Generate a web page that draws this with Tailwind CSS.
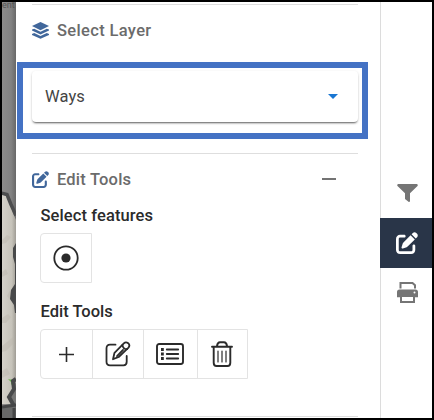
<!DOCTYPE html>
<html lang="en">
<head>
<meta charset="utf-8">
<title>Edit Tools</title>
<script src="https://cdn.jsdelivr.net/npm/@tailwindcss/browser@4"></script>
</head>
<body class="font-[Roboto,sans-serif] text-[#2b2b2b]">
<svg class="hidden">
  <symbol id="pen" viewBox="0 0 512 512"><path fill="currentColor" d="M471.6 21.7c-21.9-21.9-57.3-21.9-79.2 0L362.3 51.7l97.9 97.9 30.1-30.1c21.9-21.9 21.9-57.3 0-79.2L471.6 21.7zm-299.2 220c-6.1 6.1-10.8 13.6-13.5 21.9l-29.6 88.8c-2.9 8.6-.6 18.1 5.8 24.6s15.9 8.700 24.600 5.800l88.800-29.600c8.200-2.700 15.700-7.400 21.900-13.500L437.700 172.300 339.700 74.300 172.400 241.700zM96 64C43 64 0 107 0 160V416c0 53 43 96 96 96H352c53 0 96-43 96-96V320c0-17.700-14.300-32-32-32s-32 14.300-32 32v96c0 17.700-14.300 32-32 32H96c-17.700 0-32-14.300-32-32V160c0-17.700 14.300-32 32-32h96c17.700 0 32-14.300 32-32s-14.300-32-32-32H96z"/></symbol>
</svg>
<div class="relative flex h-[420px] w-[434px] overflow-hidden border-2 border-black bg-white">
  <!-- map -->
  <div class="relative h-[416px] w-[14px] shrink-0 bg-[#858585]">
    <svg class="block" width="14" height="416" viewBox="2 2 14 416">
      <defs>
        <linearGradient id="g" x1="0" x2="1" y1="0" y2="0"><stop offset="0" stop-color="#8c8b8a"/><stop offset=".65" stop-color="#828282"/><stop offset="1" stop-color="#686868"/></linearGradient>
        <linearGradient id="l" x1="0" x2="1" y1="0" y2="0"><stop offset="0" stop-color="#d4d1c9"/><stop offset=".7" stop-color="#c6c3ba"/><stop offset="1" stop-color="#9f9c95"/></linearGradient>
      </defs>
      <path fill="url(#g)" d="M2 2h14v416H2z"/>
      <path fill="url(#l)" d="M2 194L8 197L13 213L16 220V404H2z"/>
      <g fill="#b8b4aa" opacity=".4"><path d="M2 240l5-5 4 2-5 6-4 1zM2 272l4-3 2 5-6 3zM10 290l5 5-4 6-4-5zM2 318l6-4 3 3-5 6H2zM7 342l6-5 1 6-8 8-4 1v-6zM2 371l5-3 3 6-8 4z"/></g>
      <path d="M1 193l6 1.500 4 10 5 11" fill="none" stroke="#4c4d4e" stroke-width="3.500"/>
      <path fill="#48494a" d="M16 243l-3 5v9l2 7v20l-4 6-1 9 4 6 1 8h1z"/>
      <path fill="#6fbd52" d="M8 379l5 1v3l-2 2v-3z"/>
      <path fill="#777776" d="M16 382l-4 9-2 5 3 8v14h3z"/>
      <path d="M16 379l-3 2 1 8-5 8 5 9" fill="none" stroke="#48494a" stroke-width="4"/>
      <path fill="#686969" d="M2 407l14-1v12H2z"/><path fill="none" stroke="#454647" stroke-width="3" d="M2 407l14-2M14 408v10"/>
    </svg>
    <span class="absolute top-[-4px] left-0 text-[9px] leading-[14px] text-[#555]">ent</span>
  </div>

  <!-- panel -->
  <main class="w-[364px] shrink-0 px-4 pt-[2px]">
    <section class="h-[149px] w-[326px] border-t border-[#dedede]">
      <h2 class="flex h-[51px] items-center gap-2 text-[16.5px] leading-[24px] font-medium tracking-[0.34px] text-[#6b6b6b]">
        <svg class="h-[17px] w-[17px] shrink-0" viewBox="0 0 17 17" fill="#41679b"><path d="M8.500 0L17 4.100 8.500 8.200 0 4.100z"/><path d="M0 7.600l2.200-.9 6.300 3 6.300-3 2.200.9v1L8.500 12.400 0 8.600z"/><path d="M0 11.900l2.200-.9 6.300 3 6.300-3 2.200.9v1L8.500 16.800 0 12.900z"/></svg>
        <span class="pt-[1px]">Select Layer</span>
      </h2>
      <div class="mt-[15px] flex h-[51px] items-center justify-between rounded-[4px] bg-white pr-5 pl-[13px] shadow-[0_2px_2px_-1px_rgba(0,0,0,.55),0_1px_3px_rgba(0,0,0,.16)]">
        <span class="pt-[1px] text-[16.5px] leading-[24px] tracking-[0.1px] text-[#444]">Ways</span>
        <svg class="h-[5px] w-[10px]" viewBox="0 0 10 5"><path d="M0 0h10L5 5z" fill="#1976d2"/></svg>
      </div>
    </section>

    <section class="h-[264px] w-[326px] border-t border-b border-[#dedede]">
      <div class="flex h-[51px] items-center justify-between pr-[22px]">
        <h2 class="flex items-center gap-[8px] text-[16.5px] leading-[24px] font-medium tracking-[0.2px] text-[#6b6b6b]">
          <svg class="-mt-[1px] h-[17px] w-[17px] text-[#41679b]"><use href="#pen"/></svg>
          <span class="pt-[1px]">Edit Tools</span>
        </h2>
        <span class="-mt-[2px] h-[2px] w-[14px] bg-[#737373]"></span>
      </div>
      <div class="pl-[8px]">
        <h3 class="h-[28px] pl-[0.5px] text-[16.5px] leading-[22px] font-medium tracking-[0.1px]">Select features</h3>
        <div class="flex h-[50px] w-[52px] items-center justify-center rounded-l-[4px] border border-[#e3e3e3]">
          <svg class="h-[26px] w-[26px]" viewBox="0 0 26 26"><circle cx="13" cy="13" r="11.700" fill="none" stroke="#2b2b2b" stroke-width="1.800"/><circle cx="13" cy="13" r="4.600" fill="#2b2b2b"/></svg>
        </div>
        <h3 class="mt-[18px] h-[28px] pl-[0.5px] text-[16.5px] leading-[22px] font-medium">Edit Tools</h3>
        <div class="flex h-[50px] w-[208px] rounded-l-[4px] border border-[#e3e3e3]">
          <div class="flex w-[51px] items-center justify-center">
            <svg class="h-[15px] w-[15px]" viewBox="0 0 15 15" stroke="#2b2b2b" stroke-width="1.600"><path d="M7.500 0v15M0 7.500h15"/></svg>
          </div>
          <div class="flex w-[51px] items-center justify-center border-l border-[#e3e3e3]">
            <svg class="-ml-[1px] h-[26px] w-[26px]" viewBox="0 0 26 26" fill="none" stroke="#2b2b2b" stroke-width="1.800" stroke-linecap="round" stroke-linejoin="round"><path d="M10.500 3.700H5Q1.500 3.700 1.500 7.200V20.800q0 3.500 3.500 3.500H18.500q3.200 0 3.200-3.500V15"/><path d="M9.500 11.800L18.800 2.400q2-2 4.400-.2 2.200 2.200.3 4.400L13.700 16 8 18.200z"/><path d="M17.500 4q.4 4.300 4.600 4.200M12 15.200L18 9"/></svg>
          </div>
          <div class="flex w-[54px] items-center justify-center border-l border-[#e3e3e3] pr-[1px]">
            <svg class="-ml-[1px] h-[22px] w-[28px]" viewBox="0 0 28 22" fill="none" stroke="#2b2b2b" stroke-width="1.900"><rect x="1" y="1" width="26" height="20" rx="2.200"/><path d="M10.800 6.500h11.400M10.800 11h11.400M10.800 15.500h11.400" stroke-width="1.900" stroke-linecap="round"/><path d="M5 6.500h2.800M5 11h2.800M5 15.500h2.800" stroke-width="2.800"/></svg>
          </div>
          <div class="flex flex-1 items-center justify-center border-l border-[#e3e3e3]">
            <svg class="-ml-[1px] h-[26px] w-[22px]" viewBox="0 0 22 26" fill="none" stroke="#2b2b2b" stroke-width="1.900" stroke-linecap="round"><path d="M1 5.700h20M6 5q.5-3.700 3-3.700h4q2.500 0 3 3.700M2.700 6v15.700Q2.700 25 5.500 25h11q2.800 0 2.800-3.300V6"/><path d="M7 10v11M11 10v11M15 10v11" stroke-width="1.200"/></svg>
          </div>
        </div>
      </div>
    </section>
  </main>

  <!-- tool rail -->
  <nav class="flex w-[52px] shrink-0 flex-col border-l border-[#dcdcdc] pt-[166px] text-[#757575]">
    <div class="flex h-[50px] items-center justify-center pl-[1px]">
      <svg class="-mt-[1px] h-[18px] w-[21px]" viewBox="0 0 21 18"><path fill="currentColor" d="M1.200 0h18.600q1.600.4.700 2L13 9.300V17q-.3 1.300-1.500.7L8 14.900V9.300L.5 2Q-.4.4 1.200 0z"/></svg>
    </div>
    <div class="-ml-px flex h-[50px] items-center justify-center bg-[#293548] pl-[2px] text-white">
      <svg class="-mt-[1px] h-[22px] w-[22px]"><use href="#pen"/></svg>
    </div>
    <div class="flex h-[50px] items-center justify-center pl-[1px]">
      <svg class="-mt-[1px] h-[21px] w-[21px]" viewBox="0 0 21 21"><path fill="none" stroke="currentColor" stroke-width="2" d="M3.500 6.500V1h12l2.500 2.300v3.200"/><path fill="currentColor" d="M2.500 7.500h16Q21 7.500 21 10v5.300h-3V13H3v2.300H0V10q0-2.500 2.500-2.500z"/><path fill="#fff" stroke="currentColor" stroke-width="2" d="M4 14h13v6H4z"/><circle cx="17.500" cy="10.600" r="1" fill="#fff"/></svg>
    </div>
  </nav>

  <!-- highlight around the layer selector -->
  <div class="pointer-events-none absolute top-[60px] left-[15px] h-[77px] w-[351px] border-[6px] border-[#4472c4]"></div>
</div>
</body>
</html>
